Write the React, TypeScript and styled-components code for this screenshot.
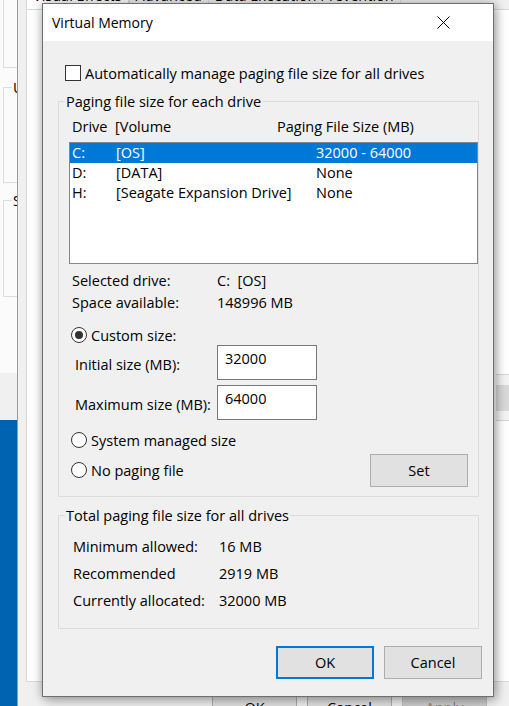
import * as React from 'react'
import styled, { createGlobalStyle } from 'styled-components'

const GlobalStyle = createGlobalStyle`
    html, body {
        margin: 0;
        padding: 0;
    }
    body {
        width: 509px;
        height: 706px;
        overflow: hidden;
        background: #0063b1;
    }
    * {
        box-sizing: border-box;
    }
`

/**
 * The desktop the windows sit on.
 */
const Desktop = styled.div`
    position: relative;
    width: 509px;
    height: 706px;
    overflow: hidden;
    background: #0063b1;
    font-family: 'Open Sans', 'Noto Sans', sans-serif;
    font-size: 14.5px;
    color: #000;
`

/**
 * System Properties window, far behind, only its left edge shows.
 */
const SysWindow = styled.div`
    position: absolute;
    left: -12px;
    top: -20px;
    width: 29px;
    height: 440px;
    overflow: hidden;
    background: #f0f0f0;
`

const SysPage = styled.div`
    width: 400px;
    background: #fbfbfb;
    height: 393px;
    padding-left: 15px;
    display: flex;
    flex-direction: column;
`

/**
 * Performance Options window, directly behind the dialog.
 */
const PerfWindow = styled.div`
    position: absolute;
    left: 17px;
    top: -30px;
    width: 520px;
    height: 760px;
    background: #f0f0f0;
    border-left: 1px solid #9a9a9a;
    padding-left: 8px;
    display: flex;
    flex-direction: column;
`

const TabStrip = styled.div`
    height: 39px;
    display: flex;
    align-items: flex-end;
`

const Tab = styled.div<{ selected?: boolean }>`
    height: 24px;
    padding: 0 6px;
    margin-right: ${p => (p.selected ? '0' : '-1px')};
    line-height: 20px;
    border: 1px solid #d9d9d9;
    border-bottom: none;
    background: ${p => (p.selected ? '#fff' : '#f0f0f0')};
    white-space: nowrap;
`

const PerfPage = styled.div`
    height: 673px;
    background: #fff;
    border: 1px solid #d9d9d9;
    padding: 364px 0 0 469px;
`

const ChangeStrip = styled.div`
    width: 60px;
    height: 47px;
    border-top: 1px solid #d6d6d6;
    border-bottom: 1px solid #d6d6d6;
    background: #f3f3f3;
    padding-top: 10px;
`

const ChangeBand = styled.div`
    height: 26px;
    background: #d9d9d9;
`

const PerfButtons = styled.div`
    display: flex;
    gap: 10px;
    margin: 11px 0 0 186px;
`

const PerfButton = styled.div<{ disabled?: boolean }>`
    width: 85px;
    height: 30px;
    line-height: 27px;
    text-align: center;
    background: ${p => (p.disabled ? '#cccccc' : '#e1e1e1')};
    border: 1px solid ${p => (p.disabled ? '#bfbfbf' : '#adadad')};
    color: ${p => (p.disabled ? '#838383' : '#000')};
`

/**
 * Virtual Memory dialog.
 */
const Dialog = styled.div`
    position: absolute;
    left: 42px;
    top: 3px;
    width: 452px;
    height: 694px;
    border: 1px solid #6f6f6f;
    background: #f0f0f0;
    box-shadow: 0 0 10px rgba(0, 0, 0, 0.28), 3px 4px 10px rgba(0, 0, 0, 0.22);
    display: flex;
    flex-direction: column;
`

const TitleBar = styled.div`
    height: 37px;
    background: #fff;
    display: flex;
    align-items: center;
    padding-left: 9px;
`

const Title = styled.span`
    font-size: 14px;
    line-height: 20px;
`

const CloseButton = styled.div`
    margin-left: auto;
    margin-right: 27px;
    width: 46px;
    height: 37px;
    display: flex;
    align-items: center;
    justify-content: center;
`

const Body = styled.div`
    padding: 0 14px 0 15px;
    display: flex;
    flex-direction: column;
`

const CheckRow = styled.label`
    margin-top: 22px;
    height: 20px;
    display: flex;
    align-items: center;
    padding-left: 7px;
`

const CheckBox = styled.span`
    width: 16px;
    height: 16px;
    border: 1px solid #333;
    background: #fff;
    margin-right: 4px;
`

const GroupBox = styled.div<{ top: number; bottom: number }>`
    margin-top: ${p => p.top}px;
    border: 1px solid #dcdcdc;
    padding-bottom: ${p => p.bottom}px;
    display: flex;
    flex-direction: column;
`

const Legend = styled.div`
    width: fit-content;
    margin: -10px 0 0 6px;
    padding: 0 1px;
    line-height: 20px;
    white-space: nowrap;
`

const DialogLegend = styled(Legend)`
    background: #f0f0f0;
`

const SysLegend = styled(Legend)`
    margin-left: 8px;
    background: #fbfbfb;
`

const SysGroup = styled.div<{ top: number; h: number }>`
    margin-top: ${p => p.top}px;
    height: ${p => p.h}px;
    border: 1px solid #dcdcdc;
    flex: none;
`

const ColumnHeader = styled.div`
    margin-top: 5px;
    height: 20px;
    line-height: 20px;
    padding-left: 13px;
    display: grid;
    grid-template-columns: 43px 162px 1fr;
    white-space: nowrap;
`

const ListBox = styled.div`
    margin: 5px 0 0 10px;
    height: 122px;
    border: 1px solid #828790;
    background: #fff;
`

const ListRow = styled.div<{ selected?: boolean }>`
    height: 20px;
    line-height: 20px;
    padding-left: 2px;
    display: grid;
    grid-template-columns: 44px 200px 1fr;
    background: ${p => (p.selected ? '#0078d7' : 'transparent')};
    color: ${p => (p.selected ? '#fff' : '#000')};
    white-space: nowrap;
`

const InfoRow = styled.div<{ top?: number }>`
    margin-top: ${p => p.top ?? 0}px;
    height: 22px;
    line-height: 22px;
    padding-left: 13px;
    display: grid;
    grid-template-columns: 145px 1fr;
`

const RadioRow = styled.div<{ top?: number }>`
    margin-top: ${p => p.top ?? 0}px;
    height: 20px;
    display: flex;
    align-items: center;
    padding-left: 12px;
    white-space: nowrap;
`

const RadioCircle = styled.span<{ checked?: boolean }>`
    width: 16px;
    height: 16px;
    border-radius: 50%;
    border: 1px solid #333;
    background: #fff;
    margin-right: 4px;
    display: flex;
    align-items: center;
    justify-content: center;
    &::after {
        content: '';
        width: 8px;
        height: 8px;
        border-radius: 50%;
        background: ${p => (p.checked ? '#333' : 'transparent')};
    }
`

const SizeRow = styled.div<{ top?: number }>`
    margin-top: ${p => p.top ?? 0}px;
    height: 35px;
    padding-left: 16px;
    display: grid;
    grid-template-columns: 142px 100px;
    align-items: center;
    white-space: nowrap;
`

const SizeLabel = styled.span`
    padding-top: 3px;
`

const TextBox = styled.div`
    height: 35px;
    border: 1px solid #7a7a7a;
    background: #fff;
    padding: 3px 7px;
    line-height: 20px;
`

const BottomSection = styled.div`
    margin-top: 10px;
    display: flex;
    justify-content: space-between;
    align-items: flex-end;
`

const RadioColumn = styled.div`
    display: flex;
    flex-direction: column;
    gap: 10px;
    margin-bottom: 7px;
`

const Button = styled.div<{ focused?: boolean }>`
    width: 98px;
    height: 33px;
    line-height: ${p => (p.focused ? '29px' : '31px')};
    text-align: center;
    background: #e1e1e1;
    border: ${p => (p.focused ? '2px solid #0078d7' : '1px solid #adadad')};
`

const SetButton = styled(Button)`
    margin-right: 10px;
`

const TotalsList = styled.div`
    margin-top: 7px;
    display: flex;
    flex-direction: column;
`

const TotalRow = styled.div`
    height: 27px;
    line-height: 27px;
    padding-left: 14px;
    display: grid;
    grid-template-columns: 146px 1fr;
    white-space: nowrap;
`

const ButtonRow = styled.div`
    margin: 17px -3px 0 0;
    display: flex;
    justify-content: flex-end;
    gap: 10px;
`

const drives = [
    { letter: 'C:', volume: '[OS]', size: '32000 - 64000', selected: true },
    { letter: 'D:', volume: '[DATA]', size: 'None' },
    { letter: 'H:', volume: '[Seagate Expansion Drive]', size: 'None' },
]

const totals = [
    ['Minimum allowed:', '16 MB'],
    ['Recommended', '2919 MB'],
    ['Currently allocated:', '32000 MB'],
]

const CloseIcon = () => (
    <svg width="13" height="13" viewBox="0 0 13 13">
        <path d="M0.5 0.5 L12.5 12.5 M12.5 0.5 L0.5 12.5" stroke="#000" strokeWidth="1" fill="none" />
    </svg>
)

const App: React.FunctionComponent = () => (
    <Desktop>
        <GlobalStyle />
        <SysWindow>
            <SysPage>
                <SysGroup top={0} h={88} />
                <SysGroup top={19} h={96}>
                    <SysLegend>User Profiles</SysLegend>
                </SysGroup>
                <SysGroup top={17} h={97}>
                    <SysLegend>Startup and Recovery</SysLegend>
                </SysGroup>
            </SysPage>
        </SysWindow>

        <PerfWindow>
            <TabStrip>
                <Tab selected>Visual Effects</Tab>
                <Tab>Advanced</Tab>
                <Tab>Data Execution Prevention</Tab>
            </TabStrip>
            <PerfPage>
                <ChangeStrip>
                    <ChangeBand />
                </ChangeStrip>
            </PerfPage>
            <PerfButtons>
                <PerfButton>OK</PerfButton>
                <PerfButton>Cancel</PerfButton>
                <PerfButton disabled>Apply</PerfButton>
            </PerfButtons>
        </PerfWindow>

        <Dialog>
            <TitleBar>
                <Title>Virtual Memory</Title>
                <CloseButton>
                    <CloseIcon />
                </CloseButton>
            </TitleBar>
            <Body>
                <CheckRow>
                    <CheckBox />
                    Automatically manage paging file size for all drives
                </CheckRow>

                <GroupBox top={18} bottom={9}>
                    <DialogLegend>Paging file size for each drive</DialogLegend>
                    <ColumnHeader>
                        <span>Drive</span>
                        <span>[Volume</span>
                        <span>Paging File Size (MB)</span>
                    </ColumnHeader>
                    <ListBox>
                        {drives.map(d => (
                            <ListRow key={d.letter} selected={d.selected}>
                                <span>{d.letter}</span>
                                <span>{d.volume}</span>
                                <span>{d.size}</span>
                            </ListRow>
                        ))}
                    </ListBox>
                    <InfoRow top={6}>
                        <span>Selected drive:</span>
                        <span>C:&nbsp; [OS]</span>
                    </InfoRow>
                    <InfoRow>
                        <span>Space available:</span>
                        <span>148996 MB</span>
                    </InfoRow>
                    <RadioRow top={11}>
                        <RadioCircle checked />
                        Custom size:
                    </RadioRow>
                    <SizeRow>
                        <SizeLabel>Initial size (MB):</SizeLabel>
                        <TextBox>32000</TextBox>
                    </SizeRow>
                    <SizeRow top={5}>
                        <SizeLabel>Maximum size (MB):</SizeLabel>
                        <TextBox>64000</TextBox>
                    </SizeRow>
                    <BottomSection>
                        <RadioColumn>
                            <RadioRow>
                                <RadioCircle />
                                System managed size
                            </RadioRow>
                            <RadioRow>
                                <RadioCircle />
                                No paging file
                            </RadioRow>
                        </RadioColumn>
                        <SetButton>Set</SetButton>
                    </BottomSection>
                </GroupBox>

                <GroupBox top={18} bottom={14}>
                    <DialogLegend>Total paging file size for all drives</DialogLegend>
                    <TotalsList>
                        {totals.map(([label, value]) => (
                            <TotalRow key={label}>
                                <span>{label}</span>
                                <span>{value}</span>
                            </TotalRow>
                        ))}
                    </TotalsList>
                </GroupBox>

                <ButtonRow>
                    <Button focused>OK</Button>
                    <Button>Cancel</Button>
                </ButtonRow>
            </Body>
        </Dialog>
    </Desktop>
)

export default App
